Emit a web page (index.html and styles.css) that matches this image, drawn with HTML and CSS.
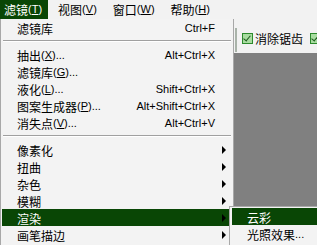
FILE: index.html
```html
<!DOCTYPE html>
<html lang="zh-CN">
<head>
  <meta charset="UTF-8" />
  <title>滤镜菜单</title>
  <link rel="stylesheet" href="styles.css">
</head>
<body>
  <div class="app">
    <div class="menubar">
      <span class="top-item active">滤镜<span class="acc">(<u>T</u>)</span></span>
      <span class="top-item">视图<span class="acc">(<u>V</u>)</span></span>
      <span class="top-item">窗口<span class="acc">(<u>W</u>)</span></span>
      <span class="top-item">帮助<span class="acc">(<u>H</u>)</span></span>
    </div>
    <div class="toolbar">
      <span class="gripper"></span>
      <span class="check"></span>
      <span class="check-label">消除锯齿</span>
      <span class="check"></span>
    </div>
    <div class="canvas"></div>

    <div class="menu">
      <div class="row">滤镜库<span class="key">Ctrl+F</span></div>
      <div class="sep"></div>
      <div class="row">抽出<span class="acc">(<u>X</u>)...</span><span class="key">Alt+Ctrl+X</span></div>
      <div class="row">滤镜库<span class="acc">(<u>G</u>)...</span></div>
      <div class="row">液化<span class="acc">(<u>L</u>)...</span><span class="key">Shift+Ctrl+X</span></div>
      <div class="row">图案生成器<span class="acc">(<u>P</u>)...</span><span class="key">Alt+Shift+Ctrl+X</span></div>
      <div class="row">消失点<span class="acc">(<u>V</u>)...</span><span class="key">Alt+Ctrl+V</span></div>
      <div class="sep"></div>
      <div class="row sub">像素化</div>
      <div class="row sub">扭曲</div>
      <div class="row sub">杂色</div>
      <div class="row sub">模糊</div>
      <div class="row sub active">渲染</div>
      <div class="row sub">画笔描边</div>
    </div>

    <div class="submenu">
      <div class="row active">云彩</div>
      <div class="row">光照效果<span class="acc">...</span></div>
    </div>
  </div>
</body>
</html>
```

FILE: styles.css
```css
body {
  margin: 0;
  background-color: #808080;
  font-family: "Noto Sans CJK SC", "Liberation Sans", sans-serif;
  font-size: 12px;
  color: #000;
}

.app {
  position: relative;
  width: 317px;
  height: 245px;
  overflow: hidden;
}

.acc,
.key {
  font-family: "Liberation Sans", sans-serif;
  font-size: 11px;
}

.menubar {
  display: flex;
  height: 19px;
  background-color: #f2f2f2;
}

.top-item {
  display: flex;
  align-items: center;
  padding: 0 6px 0 4px;
  margin-right: 6px;
  line-height: 19px;
  white-space: nowrap;
}

.top-item.active {
  background-color: #094605;
  color: #fff;
}

.toolbar {
  display: flex;
  align-items: center;
  height: 34px;
  padding-left: 235px;
  background-color: #f2f2f2;
}

.toolbar > span {
  flex-shrink: 0;
  white-space: nowrap;
}

.gripper {
  width: 2px;
  height: 24px;
  margin-top: 8px;
  background-color: #a9b3a9;
}

.check {
  position: relative;
  width: 9px;
  height: 9px;
  margin: 4px 2px 0 5px;
  border: 1px solid #2c8a2c;
  background-color: #a8dca0;
}

.check::after {
  content: "";
  position: absolute;
  left: 2px;
  top: 0;
  width: 3px;
  height: 6px;
  border: solid #1d5a1d;
  border-width: 0 1.5px 1.5px 0;
  transform: rotate(40deg);
}

.check-label {
  margin-top: 4px;
  margin-right: 2px;
}

.canvas {
  height: 192px;
  background-color: #808080;
}

.menu {
  position: absolute;
  top: 19px;
  left: 0;
  width: 230px;
  padding: 0 1px 30px 1px;
  border-right: 1px solid #a8a8a8;
  border-left: 1px solid #a8a8a8;
  background-color: #f3f3f3;
}

.row {
  position: relative;
  display: flex;
  align-items: center;
  height: 17px;
  padding: 1px 17px 0 15px;
  box-sizing: border-box;
  white-space: nowrap;
}

.row .key {
  margin-left: auto;
}

.row.active {
  background-color: #094605;
  color: #fff;
}

.row.sub::after {
  content: "";
  position: absolute;
  right: 6px;
  top: 5px;
  border-left: 4px solid #000;
  border-top: 4px solid transparent;
  border-bottom: 4px solid transparent;
}

.sep {
  height: 10px;
  display: flex;
  align-items: center;
  padding: 0 1px;
}

.sep::before {
  content: "";
  flex: 1;
  border-top: 1px solid #a0a0a0;
  border-bottom: 1px solid #fff;
}

.submenu {
  position: absolute;
  top: 206px;
  left: 229px;
  width: 110px;
  padding: 1px 2px 10px 2px;
  border: 1px solid #a8a8a8;
  background-color: #f3f3f3;
}
```
